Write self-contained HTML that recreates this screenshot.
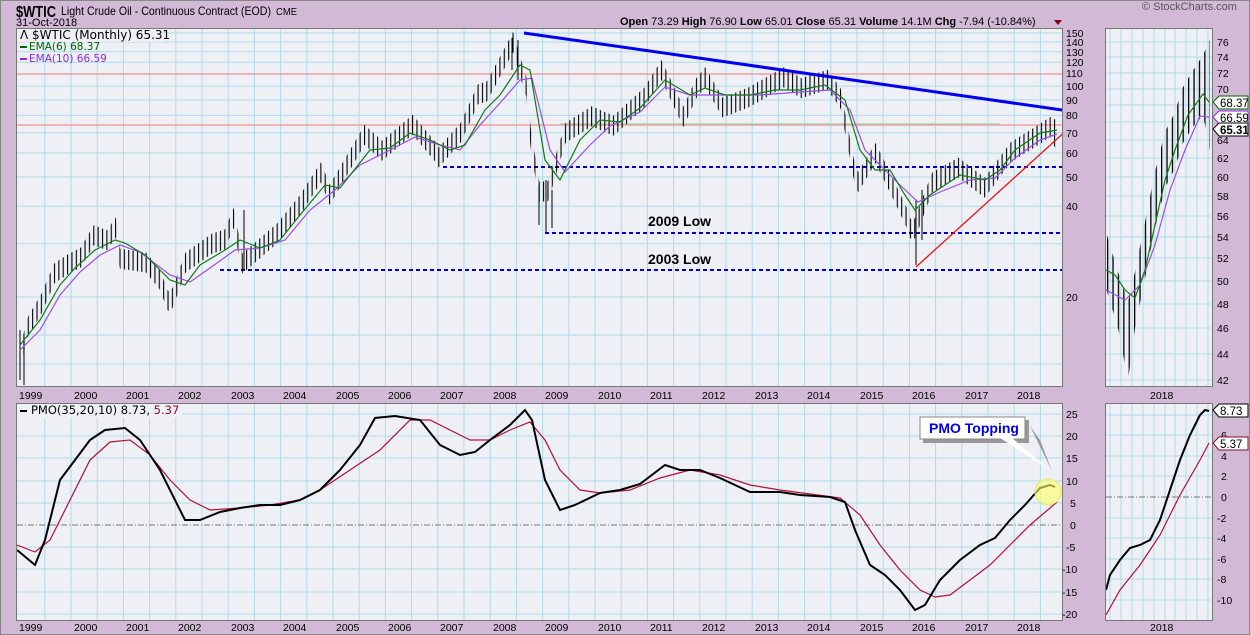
<!DOCTYPE html>
<html><head><meta charset="utf-8"><style>
html,body{margin:0;padding:0;background:#d2b9d6;}
svg{display:block;font-family:"Liberation Sans",sans-serif;}
.ax{font-size:10.5px;fill:#000;}
</style></head><body>
<svg width="1250" height="635" xmlns="http://www.w3.org/2000/svg">
<rect width="1250" height="635" fill="#d2b9d6"/>
<rect x="0.5" y="0.5" width="1249" height="634" fill="none" stroke="#888"/>
<defs>
<clipPath id="c1"><rect x="17" y="29" width="1045" height="357"/></clipPath>
<clipPath id="c2"><rect x="17" y="404" width="1045" height="216"/></clipPath>
<clipPath id="c3"><rect x="1106" y="29" width="106" height="357"/></clipPath>
<clipPath id="c4"><rect x="1106" y="404" width="106" height="216"/></clipPath>
<pattern id="bp" patternUnits="userSpaceOnUse" x="19" y="0" width="4.367" height="10"><rect x="0" y="0" width="1.1" height="10" fill="#000"/></pattern>
<pattern id="bp2" patternUnits="userSpaceOnUse" x="1107" y="0" width="5.4" height="10"><rect x="0" y="0" width="1.3" height="10" fill="#000"/></pattern>
</defs>
<rect x="16.5" y="28.5" width="1046" height="358" fill="#eff0f5" stroke="#777"/>
<rect x="16.5" y="403.5" width="1046" height="217" fill="#eff0f5" stroke="#777"/>
<rect x="1105.5" y="28.5" width="107" height="358" fill="#eff0f5" stroke="#777"/>
<rect x="1105.5" y="403.5" width="107" height="217" fill="#eff0f5" stroke="#777"/>
<!-- grid -->
<g stroke="#acdcec" stroke-width="1" fill="none">
<path d="M44.8 29V386M71 29V386M97.2 29V386M123.4 29V386M149.6 29V386M175.8 29V386M202 29V386M228.2 29V386M254.4 29V386M280.6 29V386M306.8 29V386M333 29V386M359.2 29V386M385.4 29V386M411.6 29V386M437.8 29V386M464 29V386M490.2 29V386M516.4 29V386M542.6 29V386M568.8 29V386M595 29V386M621.2 29V386M647.4 29V386M673.6 29V386M699.8 29V386M726 29V386M752.2 29V386M778.4 29V386M804.6 29V386M830.8 29V386M857 29V386M883.2 29V386M909.4 29V386M935.6 29V386M961.8 29V386M988 29V386M1014.2 29V386M1040.4 29V386"/>
<path d="M44.8 404V620M71 404V620M97.2 404V620M123.4 404V620M149.6 404V620M175.8 404V620M202 404V620M228.2 404V620M254.4 404V620M280.6 404V620M306.8 404V620M333 404V620M359.2 404V620M385.4 404V620M411.6 404V620M437.8 404V620M464 404V620M490.2 404V620M516.4 404V620M542.6 404V620M568.8 404V620M595 404V620M621.2 404V620M647.4 404V620M673.6 404V620M699.8 404V620M726 404V620M752.2 404V620M778.4 404V620M804.6 404V620M830.8 404V620M857 404V620M883.2 404V620M909.4 404V620M935.6 404V620M961.8 404V620M988 404V620M1014.2 404V620M1040.4 404V620"/>
<path d="M17 33H1062M17 42H1062M17 51.7H1062M17 62.2H1062M17 86.1H1062M17 99.9H1062M17 115.4H1062M17 132.8H1062M17 153H1062M17 177H1062M17 206.2H1062M17 243.8H1062M17 297H1062M17 335H1062M17 364H1062"/>
<path d="M17 414H1062M17 436H1062M17 458H1062M17 481H1062M17 503H1062M17 547H1062M17 569H1062M17 592H1062M17 614H1062"/>
<path d="M1110 29V386M1121 29V386M1132 29V386M1143 29V386M1154 29V386M1165 29V386M1175 29V386M1186 29V386M1197 29V386M1208 29V386M1110 404V620M1121 404V620M1132 404V620M1143 404V620M1154 404V620M1165 404V620M1175 404V620M1186 404V620M1197 404V620M1208 404V620"/>
<path d="M1106 42H1212M1106 57H1212M1106 73H1212M1106 89H1212M1106 105H1212M1106 122H1212M1106 140H1212M1106 158H1212M1106 177H1212M1106 196H1212M1106 216H1212M1106 237H1212M1106 258H1212M1106 281H1212M1106 304H1212M1106 328H1212M1106 354H1212M1106 380H1212"/>
<path d="M1106 415H1212M1106 435H1212M1106 456H1212M1106 476H1212M1106 518H1212M1106 538H1212M1106 559H1212M1106 579H1212M1106 600H1212"/>
</g>
<g clip-path="url(#c1)" fill="none">
<line x1="17" x2="1062" y1="74" y2="74" stroke="#f0a0a0" stroke-width="1.5"/>
<line x1="17" x2="1062" y1="125" y2="125" stroke="#f0a0a0" stroke-width="1.5"/>
<line x1="560" x2="1000" y1="124" y2="124" stroke="#9c9" stroke-width="1"/>
<g stroke="#0000cc" stroke-width="2" stroke-dasharray="4,3">
<line x1="443" x2="1062" y1="167" y2="167"/>
<line x1="545" x2="1062" y1="233" y2="233"/>
<line x1="220" x2="1062" y1="270" y2="270"/>
</g>
<polygon fill="url(#bp)" points="19.6 348.5 28.3 316.1 41.4 293.7 54.5 263.1 67.6 254.5 80.7 247.6 93.8 225.3 107 230.3 115.7 217.4 120 248.6 146.2 252.6 159.3 268.7 168.1 291 172.4 288.3 185.5 252.6 211.7 233.8 224.9 229.5 233.6 207.7 242.3 253.6 277.3 223.3 299.1 196.4 320.9 162.2 329.7 185 364.6 124.8 382.1 140.8 412.6 114.8 434.5 140.8 438.8 147.5 460.7 122.8 478.1 84.1 486.9 81.5 513.1 32 517.4 47.9 526.2 76.1 530.5 126.5 539.3 181.8 548 181.3 565.5 123 591.7 106.3 613.5 115.8 644.1 88 661.5 60.1 683.4 107 696.5 77.7 705.2 67.3 722.7 97.6 748.9 87.3 783.8 67.3 801.3 78.2 827.5 69.7 840.6 88.5 853.7 158.5 858.1 172.3 875.5 143 888.6 169.5 906.1 206.3 910.5 218.9 914.8 218.6 932.3 172.3 958.5 157.6 984.7 177.8 1010.9 142.1 1032.7 128.5 1050.2 117 1056 120 1056 150 1050.2 137 1032.7 148.5 1010.9 162.1 984.7 197.8 958.5 177.6 932.3 192.3 914.8 238.6 910.5 238.9 906.1 226.3 888.6 189.5 875.5 163 858.1 192.3 853.7 178.5 840.6 108.5 827.5 89.7 801.3 98.2 783.8 87.3 748.9 107.3 722.7 117.6 705.2 87.3 696.5 97.7 683.4 127 661.5 80.1 644.1 108 613.5 135.8 591.7 126.3 565.5 143 548 201.3 539.3 201.8 530.5 146.5 526.2 96.1 517.4 67.9 513.1 52 486.9 101.5 478.1 104.1 460.7 142.8 438.8 167.5 434.5 160.8 412.6 134.8 382.1 160.8 364.6 144.8 329.7 205 320.9 182.2 299.1 216.4 277.3 243.3 242.3 273.6 233.6 227.7 224.9 249.5 211.7 253.8 185.5 272.6 172.4 308.3 168.1 311 159.3 288.7 146.2 272.6 120 268.6 115.7 237.4 107 250.3 93.8 245.3 80.7 267.6 67.6 274.5 54.5 283.1 41.4 313.7 28.3 336.1 19.6 368.5"/>
<path stroke="#000" stroke-width="1" d="M539 185V225M546 180V232M552 190V228M916 200V265M922 190V240M512 38V70M518 40V80M20 330V380M24 340V385M244 210V270"/>
<path stroke="#9b4de8" stroke-width="1.2" d="M20 350L40 330L60 295L80 272L100 255L120 245L140 252L170 275L190 282L210 268L235 250L260 248L285 240L310 210L335 190L360 165L390 150L415 137L440 145L460 150L480 125L500 103L520 80L532 78L550 150L565 172L590 145L610 126L640 112L665 87L690 95L720 95L760 95L800 92L830 90L850 110L865 150L880 165L900 185L918 202L940 192L970 180L995 178L1015 158L1040 140L1057 134"/>
<path stroke="#137a13" stroke-width="1.2" d="M20 345L40 320L60 285L75 268L95 250L115 240L125 243L145 255L170 280L185 285L200 265L225 250L240 240L260 248L280 240L300 215L325 185L340 188L370 150L390 148L410 133L430 140L450 150L465 145L485 110L500 95L520 65L530 70L545 160L560 180L580 140L600 120L620 122L640 108L665 80L690 95L705 88L725 95L750 95L775 90L800 90L825 85L845 100L860 150L875 170L890 170L905 195L915 210L930 195L960 175L985 180L1000 170L1015 150L1040 133L1057 130"/>
<line x1="524" y1="33" x2="1097" y2="115" stroke="#0000ee" stroke-width="3"/>
<line x1="916" y1="267" x2="1080" y2="118" stroke="#ee1111" stroke-width="1.3"/>
</g>
<g clip-path="url(#c2)" fill="none">
<line x1="17" x2="1062" y1="525" y2="525" stroke="#777" stroke-dasharray="6,2,1,2"/>
<path stroke="#b0103a" stroke-width="1.2" d="M17 545L35 552L50 540L70 500L90 460L110 442L130 440L150 455L170 480L190 500L210 510L240 508L270 505L300 500L320 490L350 470L380 450L410 420L430 420L450 430L470 440L490 440L510 430L530 422L545 440L560 470L580 490L600 493L630 490L660 478L690 470L720 475L750 485L780 490L810 494L840 498L860 515L880 545L900 570L920 590L935 597L950 595L970 580L990 565L1010 545L1030 525L1050 508L1057 502"/>
<path stroke="#000" stroke-width="2" d="M17 550L35 565L45 540L60 480L75 460L90 440L105 430L125 428L140 440L160 470L185 520L200 520L220 512L240 508L260 505L280 505L300 500L320 490L340 470L360 445L375 418L395 416L420 420L440 445L460 455L475 452L490 440L510 425L525 410L532 420L545 480L560 510L575 505L600 493L620 490L640 484L665 465L680 470L700 470L720 478L750 492L780 492L800 495L830 497L845 502L855 530L870 565L885 575L900 590L915 610L925 605L940 580L960 560L980 545L995 538L1010 520L1025 505L1040 488L1050 485L1055 487"/>
</g>
<g clip-path="url(#c3)" fill="none">
<polygon fill="url(#bp2)" points="1106 232 1118 272 1128 302 1135 272 1145 222 1155 172 1165 132 1175 112 1183 87 1192 72 1203 55 1210 40 1210 150 1203 115 1192 128 1183 143 1175 168 1165 188 1155 228 1145 278 1135 328 1128 380 1118 328 1106 288"/>
<path stroke="#9b4de8" stroke-width="1.2" d="M1106 290L1125 300L1140 285L1155 245L1170 190L1185 150L1200 116L1209 117"/>
<path stroke="#137a13" stroke-width="1.2" d="M1106 270L1115 275L1125 290L1135 298L1145 270L1155 225L1165 180L1175 150L1188 115L1203 94L1209 102"/>
</g>
<g clip-path="url(#c4)" fill="none">
<line x1="1106" x2="1212" y1="497" y2="497" stroke="#777" stroke-dasharray="6,2,1,2"/>
<path stroke="#b0103a" stroke-width="1.2" d="M1106 615L1120 590L1140 565L1160 535L1180 495L1200 460L1209 443"/>
<path stroke="#000" stroke-width="2" d="M1106 590L1110 575L1120 560L1130 548L1140 545L1150 540L1160 520L1170 490L1180 460L1190 435L1200 415L1205 410L1209 411"/>
</g>
<!-- header -->
<text x="16" y="17" font-size="16" font-weight="bold" textLength="40" lengthAdjust="spacingAndGlyphs">$WTIC</text>
<text x="61" y="15" font-size="12" textLength="210" lengthAdjust="spacingAndGlyphs">Light Crude Oil - Continuous Contract (EOD)</text>
<text x="276" y="15" font-size="10" textLength="21" lengthAdjust="spacingAndGlyphs">CME</text>
<text x="16" y="26" font-size="11">31-Oct-2018</text>
<text x="1142" y="10" font-size="11" fill="#555">© StockCharts.com</text>
<text x="620" y="25" font-size="11"><tspan font-weight="bold">Open</tspan> 73.29 <tspan font-weight="bold">High</tspan> 76.90 <tspan font-weight="bold">Low</tspan> 65.01 <tspan font-weight="bold">Close</tspan> 65.31 <tspan font-weight="bold">Volume</tspan> 14.1M <tspan font-weight="bold">Chg</tspan> -7.94 (-10.84%)</text>
<path d="M1054 20 L1062 20 L1058 25 Z" fill="#800020"/>
<!-- legends -->
<rect x="17" y="29" width="145" height="13" fill="#eff0f5"/>
<text x="20" y="39" font-size="12" font-family="DejaVu Sans,sans-serif">ⴷ $WTIC (Monthly) 65.31</text>
<rect x="20" y="46" width="7" height="2" fill="#006400"/>
<text x="29" y="50" font-size="10.5" fill="#006400" font-family="DejaVu Sans,sans-serif">EMA(6) 68.37</text>
<rect x="20" y="58" width="7" height="2" fill="#8a2be2"/>
<text x="29" y="62" font-size="10.5" fill="#8a2be2" font-family="DejaVu Sans,sans-serif">EMA(10) 66.59</text>
<rect x="17" y="404" width="165" height="14" fill="#eff0f5"/>
<rect x="20" y="410" width="7" height="2" fill="#000"/>
<text x="31" y="414" font-size="11.5" font-family="DejaVu Sans,sans-serif">PMO(35,20,10) 8.73, <tspan fill="#8b0a30">5.37</tspan></text>
<!-- annotations -->
<text x="648" y="226" font-size="14" font-weight="bold">2009 Low</text>
<text x="648" y="264" font-size="14" font-weight="bold">2003 Low</text>
<path d="M1030 426 L1052 471 L1040 440 Z" fill="#999"/>
<rect x="923" y="420" width="106" height="23" fill="#999"/>
<rect x="920" y="417" width="105" height="22" fill="#fff" stroke="#888"/>
<path d="M1000 438 L1050 470 L1012 438 Z" fill="#fff"/>
<text x="929" y="433" font-size="14" font-weight="bold" fill="#0000ee">PMO Topping</text>
<circle cx="1048" cy="492" r="13" fill="#ffff66" fill-opacity="0.6" stroke="#e8e860"/>
<!-- y labels -->
<g class="ax">
<text x="1066" y="37">150</text><text x="1066" y="46">140</text><text x="1066" y="56">130</text><text x="1066" y="66">120</text><text x="1066" y="77">110</text><text x="1066" y="90">100</text><text x="1066" y="104">90</text><text x="1066" y="119">80</text><text x="1066" y="137">70</text><text x="1066" y="157">60</text><text x="1066" y="181">50</text><text x="1066" y="210">40</text><text x="1066" y="301">20</text>
<text x="1066" y="418">25</text><text x="1066" y="440">20</text><text x="1066" y="462">15</text><text x="1066" y="485">10</text><text x="1070" y="507">5</text><text x="1070" y="529">0</text><text x="1066" y="551">-5</text><text x="1062" y="573">-10</text><text x="1062" y="596">-15</text><text x="1062" y="618">-20</text>
<text x="1217" y="46">76</text><text x="1217" y="61">74</text><text x="1217" y="77">72</text><text x="1217" y="93">70</text><text x="1217" y="144">64</text><text x="1217" y="162">62</text><text x="1217" y="181">60</text><text x="1217" y="200">58</text><text x="1217" y="220">56</text><text x="1217" y="241">54</text><text x="1217" y="262">52</text><text x="1217" y="285">50</text><text x="1217" y="308">48</text><text x="1217" y="332">46</text><text x="1217" y="358">44</text><text x="1217" y="384">42</text>
<text x="1221" y="439">6</text><text x="1221" y="460">4</text><text x="1221" y="480">2</text><text x="1221" y="501">0</text><text x="1217" y="522">-2</text><text x="1217" y="542">-4</text><text x="1217" y="563">-6</text><text x="1217" y="583">-8</text><text x="1217" y="604">-10</text>
</g>
<g class="ax" font-size="11">
<text x="19" y="399">1999</text><text x="74" y="399">2000</text><text x="126" y="399">2001</text><text x="178" y="399">2002</text><text x="231" y="399">2003</text><text x="283" y="399">2004</text><text x="336" y="399">2005</text><text x="388" y="399">2006</text><text x="440" y="399">2007</text><text x="493" y="399">2008</text><text x="545" y="399">2009</text><text x="598" y="399">2010</text><text x="650" y="399">2011</text><text x="702" y="399">2012</text><text x="755" y="399">2013</text><text x="807" y="399">2014</text><text x="860" y="399">2015</text><text x="912" y="399">2016</text><text x="965" y="399">2017</text><text x="1017" y="399">2018</text><text x="1150" y="399">2018</text>
<text x="19" y="631">1999</text><text x="74" y="631">2000</text><text x="126" y="631">2001</text><text x="178" y="631">2002</text><text x="231" y="631">2003</text><text x="283" y="631">2004</text><text x="336" y="631">2005</text><text x="388" y="631">2006</text><text x="440" y="631">2007</text><text x="493" y="631">2008</text><text x="545" y="631">2009</text><text x="598" y="631">2010</text><text x="650" y="631">2011</text><text x="702" y="631">2012</text><text x="755" y="631">2013</text><text x="807" y="631">2014</text><text x="860" y="631">2015</text><text x="912" y="631">2016</text><text x="965" y="631">2017</text><text x="1017" y="631">2018</text><text x="1150" y="631">2018</text>
</g>
<g font-size="11.5">
<path d="M1213 102 L1219 96 L1248 96 L1248 109 L1219 109 Z" fill="#fff" stroke="#006400"/><text x="1220" y="107">68.37</text>
<path d="M1213 117 L1219 111 L1248 111 L1248 124 L1219 124 Z" fill="#fff" stroke="#8a2be2"/><text x="1220" y="122">66.59</text>
<path d="M1213 129 L1219 123 L1248 123 L1248 136 L1219 136 Z" fill="#fff" stroke="#000"/><text x="1220" y="134" font-weight="bold">65.31</text>
<path d="M1213 410 L1219 404 L1248 404 L1248 417 L1219 417 Z" fill="#fff" stroke="#000"/><text x="1220" y="415">8.73</text>
<path d="M1213 443 L1219 437 L1248 437 L1248 450 L1219 450 Z" fill="#fff" stroke="#8b0a30"/><text x="1220" y="448">5.37</text>
</g>
</svg>
</body></html>
